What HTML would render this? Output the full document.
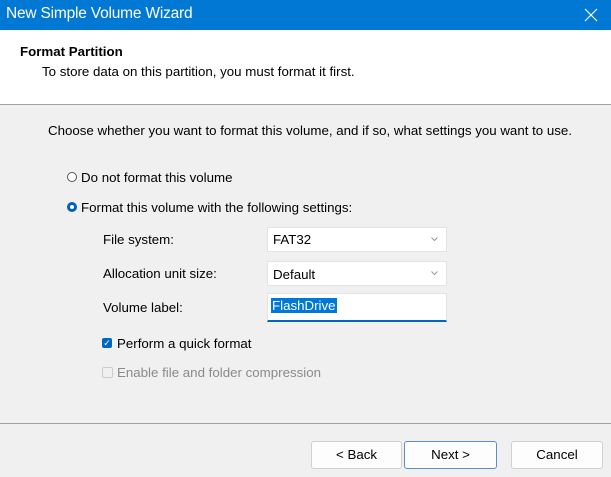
<!DOCTYPE html><html><head><style>
body{margin:0;width:611px;height:477px;overflow:hidden;background:#f0f0f0;font-family:"Liberation Sans",sans-serif;font-size:13.3px;color:#000;position:relative}
.a{position:absolute;white-space:nowrap}
.box{position:absolute;background:#fff;border:1px solid #e3e3e3;box-sizing:border-box}
.btn{position:absolute;top:441px;height:28px;background:#fdfdfd;border:1px solid #d0d0d0;border-radius:3px;box-sizing:border-box;text-align:center;line-height:26px}
</style></head><body>
<div class="a" style="left:0;top:0;width:611px;height:30px;background:#0078d4"></div>
<div class="a" style="left:6px;top:5px;font-size:15.5px;color:#fff;letter-spacing:-0.2px">New Simple Volume Wizard</div>
<svg class="a" style="left:584px;top:8px" width="14" height="14"><path d="M1 1L13 13M13 1L1 13" stroke="#fff" stroke-width="1.2"/></svg>
<div class="a" style="left:0;top:30px;width:611px;height:74px;background:#fff;border-bottom:1px solid #a0a0a0"></div>
<div class="a" style="left:20px;top:44px;font-weight:bold">Format Partition</div>
<div class="a" style="left:42px;top:64px">To store data on this partition, you must format it first.</div>
<div class="a" style="left:48px;top:123px">Choose whether you want to format this volume, and if so, what settings you want to use.</div>
<div class="a" style="left:67px;top:172px;width:8px;height:8px;border:1px solid #555;border-radius:50%;background:#fff"></div>
<div class="a" style="left:81px;top:170px">Do not format this volume</div>
<div class="a" style="left:67px;top:202px;width:4px;height:4px;border:3px solid #0060c0;border-radius:50%;background:#fff"></div>
<div class="a" style="left:81px;top:200px">Format this volume with the following settings:</div>
<div class="a" style="left:103px;top:232px">File system:</div>
<div class="box" style="left:267px;top:227px;width:180px;height:25px"></div>
<div class="a" style="left:273px;top:232px">FAT32</div>
<svg class="a" style="left:431px;top:237px" width="7" height="5"><path d="M0.5 0.5L3.5 3.5L6.5 0.5" stroke="#999" fill="none"/></svg>
<div class="a" style="left:103px;top:266px">Allocation unit size:</div>
<div class="box" style="left:267px;top:261px;width:180px;height:25px"></div>
<div class="a" style="left:273px;top:267px">Default</div>
<svg class="a" style="left:431px;top:271px" width="7" height="5"><path d="M0.5 0.5L3.5 3.5L6.5 0.5" stroke="#999" fill="none"/></svg>
<div class="a" style="left:103px;top:300px">Volume label:</div>
<div class="box" style="left:267px;top:293px;width:180px;height:29px;border-bottom:2px solid #0067c0"></div>
<div class="a" style="left:271px;top:298px;background:#0078d7;color:#fff;padding:0 1px">FlashDrive</div>
<div class="a" style="left:102px;top:338px;width:10px;height:10px;background:#0067c0;border-radius:2px;color:#fff;font-size:9px;line-height:10px;text-align:center">✓</div>
<div class="a" style="left:117px;top:336px">Perform a quick format</div>
<div class="a" style="left:102px;top:367px;width:9px;height:9px;border:1px solid #ccc;border-radius:2px"></div>
<div class="a" style="left:117px;top:365px;color:#8a8a8a">Enable file and folder compression</div>
<div class="a" style="left:0;top:423px;width:611px;height:1px;background:#a0a0a0"></div>
<div class="btn" style="left:311px;width:91px">&lt; Back</div>
<div class="btn" style="left:404px;width:93px;border-color:#5a8fc8">Next &gt;</div>
<div class="btn" style="left:511px;width:92px">Cancel</div>
</body></html>
